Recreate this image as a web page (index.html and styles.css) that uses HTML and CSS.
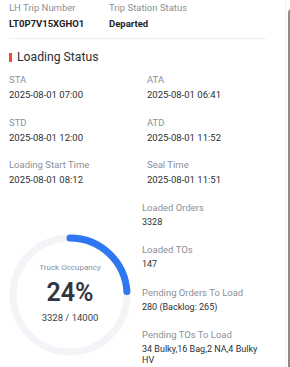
FILE: index.html
```
<!DOCTYPE html>
<html>
<head>
<meta charset="utf-8">
<link rel="stylesheet" href="styles.css">
</head>
<body>
<div class="page">
  <main class="main">
    <div class="head">
      <div class="head-col head-col--first">
        <div class="head-label">LH Trip Number</div>
        <div class="head-value">LT0P7V15XGHO1</div>
      </div>
      <div class="head-col">
        <div class="head-label">Trip Station Status</div>
        <div class="head-value">Departed</div>
      </div>
    </div>
    <div class="divider"></div>
    <div class="title"><span class="title-bar"></span><span class="title-text">Loading Status</span></div>
    <div class="grid">
      <div class="field"><div class="label">STA</div><div class="value">2025-08-01 07:00</div></div>
      <div class="field"><div class="label">ATA</div><div class="value">2025-08-01 06:41</div></div>
      <div class="field"><div class="label">STD</div><div class="value">2025-08-01 12:00</div></div>
      <div class="field"><div class="label">ATD</div><div class="value">2025-08-01 11:52</div></div>
      <div class="field"><div class="label">Loading Start Time</div><div class="value">2025-08-01 08:12</div></div>
      <div class="field"><div class="label">Seal Time</div><div class="value">2025-08-01 11:51</div></div>
    </div>
    <div class="bottom">
      <div class="gauge-wrap">
        <div class="gauge">
          <svg class="gauge-svg" width="122" height="122" viewBox="0 0 122 122">
            <circle cx="61" cy="61" r="57" fill="none" stroke="#f2f4f8" stroke-width="7"/>
            <circle cx="61" cy="61" r="57" fill="none" stroke="#2f76f2" stroke-width="7" stroke-linecap="round" stroke-dasharray="85.9 358.1" transform="rotate(-90 61 61)"/>
          </svg>
          <div class="gauge-text">
            <div class="gauge-label">Truck Occupancy</div>
            <div class="gauge-pct">24%</div>
            <div class="gauge-sub">3328 / 14000</div>
          </div>
        </div>
      </div>
      <div class="list">
        <div class="field"><div class="label">Loaded Orders</div><div class="value value--sm">3328</div></div>
        <div class="field"><div class="label">Loaded TOs</div><div class="value value--sm">147</div></div>
        <div class="field"><div class="label">Pending Orders To Load</div><div class="value value--sm">280 (Backlog: 265)</div></div>
        <div class="field"><div class="label">Pending TOs To Load</div><div class="value value--sm">34 Bulky,16 Bag,2 NA,4 Bulky HV</div></div>
      </div>
    </div>
  </main>
  <div class="scroll">
    <div class="scroll-arrow"></div>
    <div class="scroll-thumb"></div>
  </div>
</div>
</body>
</html>
```
FILE: styles.css
```
html, body {
  margin: 0;
  padding: 0;
  background: #ffffff;
  overflow: hidden;
}
body {
  font-family: Roboto, "Liberation Sans", sans-serif;
  color: #2b2f36;
}
.page {
  display: flex;
  width: 290px;
  height: 367px;
  overflow: hidden;
}
.main {
  width: 268px;
  padding-left: 9px;
  flex: none;
}
.head {
  display: flex;
  padding-top: 1px;
}
.head-col--first {
  width: 100px;
}
.head-label {
  font-size: 9.5px;
  line-height: 13px;
  color: #8b9099;
}
.head-value {
  font-size: 9.5px;
  line-height: 14px;
  margin-top: 3px;
  font-weight: 700;
  color: #1f2329;
}
.divider {
  height: 1px;
  background: #eceef1;
  margin-top: 7px;
  width: 257px;
}
.title {
  display: flex;
  align-items: center;
  margin-top: 10px;
  height: 16px;
}
.title-bar {
  width: 3px;
  height: 9px;
  background: #ee4d2d;
  margin-right: 5px;
}
.title-text {
  font-size: 12.2px;
  color: #2b2f36;
}
.grid {
  display: grid;
  grid-template-columns: 138px 116px;
  margin-top: 8px;
}
.field {
  height: 42.5px;
}
.label {
  font-size: 9.5px;
  line-height: 13px;
  color: #8b9099;
}
.value {
  font-size: 9.5px;
  line-height: 11px;
  margin-top: 3px;
  color: #2b2f36;
}
.value--sm {
  font-size: 9px;
}
.bottom {
  display: flex;
}
.gauge-wrap {
  width: 133px;
  flex: none;
  padding-top: 33px;
}
.list {
  width: 121px;
}
.gauge {
  display: grid;
  width: 122px;
  height: 122px;
}
.gauge-svg, .gauge-text {
  grid-area: 1 / 1;
}
.gauge-text {
  display: flex;
  flex-direction: column;
  align-items: center;
  padding-top: 29px;
}
.gauge-label {
  font-size: 8px;
  line-height: 10px;
  color: #8b9099;
}
.gauge-pct {
  font-size: 25px;
  line-height: 30px;
  font-weight: 600;
  color: #303540;
  margin-top: 5px;
}
.gauge-sub {
  font-size: 9.5px;
  line-height: 12px;
  color: #3a3f47;
  margin-top: 4px;
}
.scroll {
  width: 13px;
  flex: none;
  display: flex;
  flex-direction: column;
  align-items: flex-end;
  border-left: 1px solid #f1f1f1;
  margin-left: 8px;
}
.scroll-arrow {
  width: 7px;
  height: 2px;
  background: #a0a0a0;
  margin-right: 2px;
}
.scroll-thumb {
  width: 9px;
  margin-top: 7px;
  flex: 1;
  background: #8c8c8c;
  border-radius: 4px 4px 0 0;
  margin-right: 2px;
}
```
